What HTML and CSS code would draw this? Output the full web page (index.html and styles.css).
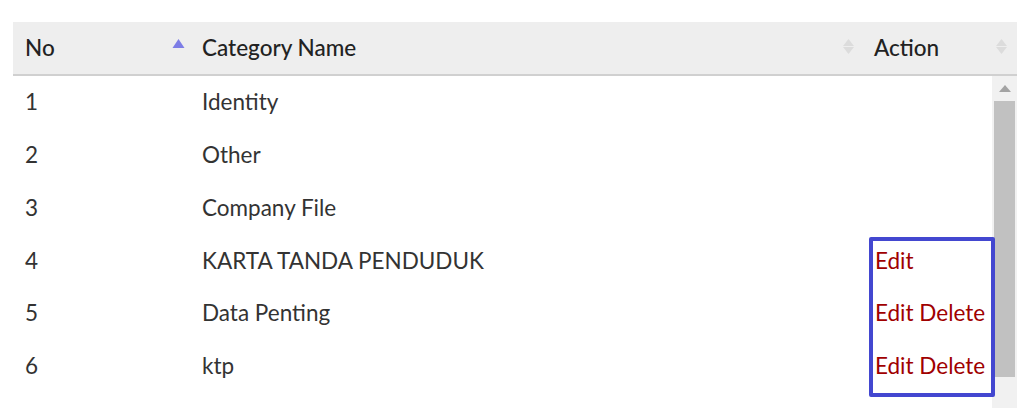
FILE: index.html
```html
<!DOCTYPE html>
<html>
<head>
<meta charset="utf-8">
<link rel="stylesheet" href="styles.css">
</head>
<body>
<div class="wrap">
  <table class="head">
    <colgroup><col class="c-no-h"><col class="c-name-h"><col></colgroup>
    <tr>
      <th class="th-no"><div class="th-in"><span>No</span>
        <svg class="sort" width="13" height="16" viewBox="0 0 13 16"><polygon points="6.5,1 12.5,10 0.5,10" fill="#7d7de6"/></svg></div></th>
      <th class="th-name"><div class="th-in"><span>Category Name</span>
        <svg class="sort" width="13" height="16" viewBox="0 0 13 16"><polygon points="6.5,1 12,8 1,8" fill="#dcdcdc"/><polygon points="1,9 12,9 6.5,16" fill="#dcdcdc"/></svg></div></th>
      <th class="th-act"><div class="th-in"><span>Action</span>
        <svg class="sort" width="13" height="16" viewBox="0 0 13 16"><polygon points="6.5,1 12,8 1,8" fill="#dcdcdc"/><polygon points="1,9 12,9 6.5,16" fill="#dcdcdc"/></svg></div></th>
    </tr>
  </table>
  <div class="body">
    <table class="rows">
      <colgroup><col class="c-no"><col class="c-name"><col></colgroup>
      <tr><td>1</td><td>Identity</td><td></td></tr>
      <tr><td>2</td><td>Other</td><td></td></tr>
      <tr><td>3</td><td>Company File</td><td></td></tr>
      <tr><td>4</td><td>KARTA TANDA PENDUDUK</td><td class="act"><a href="#">Edit</a></td></tr>
      <tr><td>5</td><td>Data Penting</td><td class="act"><a href="#">Edit</a> <a href="#">Delete</a></td></tr>
      <tr><td>6</td><td>ktp</td><td class="act"><a href="#">Edit</a> <a href="#">Delete</a></td></tr>
    </table>
    <div class="scrollbar">
      <div class="sb-btn"><svg width="12" height="7" viewBox="0 0 12 7"><polygon points="6,0 12,7 0,7" fill="#a3a3a3"/></svg></div>
      <div class="sb-thumb"></div>
    </div>
    <div class="highlight"></div>
  </div>
</div>
</body>
</html>
```
FILE: styles.css
```css
html, body {
  margin: 0;
  padding: 0;
  background: #fff;
  font-family: Lato, "Open Sans", "Liberation Sans", sans-serif;
  font-size: 22.5px;
  overflow: hidden;
}
.wrap {
  padding: 22px 9px 0 13px;
}
table {
  border-collapse: collapse;
  table-layout: fixed;
  width: 100%;
}
.head {
  background: #eeeeee;
  border-bottom: 2px solid #d0d0d0;
}
.c-no-h { width: 177px; }
.c-name-h { width: 672px; }
.head th {
  height: 52px;
  padding: 0 0 0 12px;
  text-align: left;
  font-weight: 500;
  color: #222;
}
.th-in {
  display: flex;
  align-items: center;
}
.th-in span { margin-top: -2px; }
.th-in .sort { margin-left: auto; margin-top: -4px; }
.th-no { padding-right: 5px !important; }
.th-name { padding-right: 7px !important; }
.th-act { padding-right: 9px !important; }
.body {
  display: flex;
  position: relative;
  height: 332px;
}
.rows {
  flex: 1;
  align-self: flex-start;
}
.c-no { width: 177px; }
.c-name { width: 673px; }
.rows td {
  height: 52.75px;
  padding: 0 0 0 12px;
  line-height: 26px;
  color: #333;
  white-space: nowrap;
}
.act a {
  color: #a00000;
  text-decoration: none;
}
.scrollbar {
  width: 25px;
  background: #f1f1f1;
  display: flex;
  flex-direction: column;
  align-items: center;
}
.sb-btn {
  height: 25px;
  display: flex;
  align-items: center;
  justify-content: center;
}
.sb-thumb {
  width: 21px;
  height: 276px;
  background: #c1c1c1;
}
.highlight {
  position: absolute;
  left: 856px;
  top: 161px;
  width: 118px;
  height: 152px;
  border: 4px solid #4347d0;
  border-radius: 2px;
}
```
